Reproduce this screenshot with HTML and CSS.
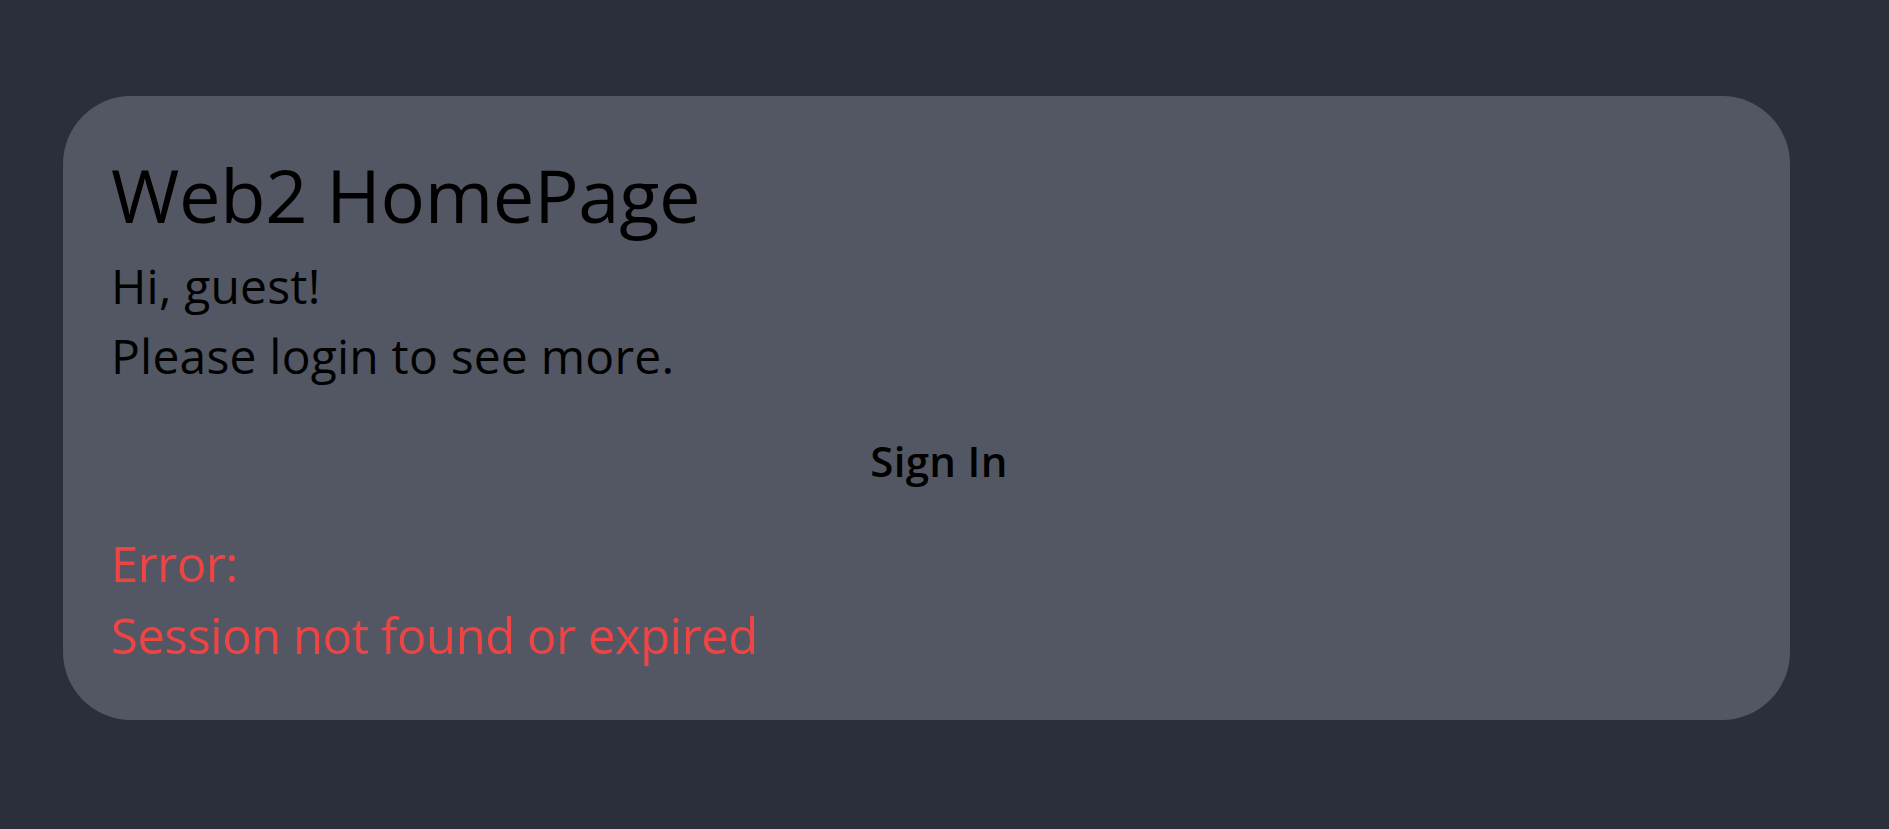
FILE: index.html
```html
<!DOCTYPE html>
<html lang="en">
<head>
<meta charset="utf-8">
<title>Web2 HomePage</title>
<link rel="stylesheet" href="styles.css">
</head>
<body>
<main class="page">
  <section class="card">
    <h1 class="title">Web2 HomePage</h1>
    <div class="greeting">
      <p class="line">Hi, guest!</p>
      <p class="line">Please login to see more.</p>
    </div>
    <div class="actions">
      <button class="signin" type="button">Sign In</button>
    </div>
    <div class="error">
      <p class="error-line">Error:</p>
      <p class="error-line">Session not found or expired</p>
    </div>
  </section>
</main>
</body>
</html>
```
FILE: styles.css
```css
html, body {
  margin: 0;
  padding: 0;
  background: #2b2f3b;
  height: 100%;
}

body {
  font-family: "Open Sans", "Noto Sans", "DejaVu Sans", sans-serif;
  color: #000;
}

.page {
  padding: 96px 99px 0 63px;
}

.card {
  background: #525763;
  border-radius: 68px;
  padding: 54px 48px 49px 48px;
  display: flex;
  flex-direction: column;
}

.title {
  margin: 0;
  font-size: 74px;
  font-weight: 400;
  line-height: 90px;
  letter-spacing: -0.3px;
}

.greeting {
  margin-top: 11px;
}

.line {
  margin: 0;
  font-size: 48px;
  line-height: 70px;
  letter-spacing: 0.2px;
}

.actions {
  margin-top: 40px;
  display: flex;
  justify-content: center;
  padding-left: 25px;
}

.signin {
  background: none;
  border: none;
  padding: 0;
  margin: 0;
  font-family: inherit;
  font-size: 42px;
  font-weight: 600;
  line-height: 60px;
  letter-spacing: 0.3px;
  color: #000;
  cursor: pointer;
}

.error {
  margin-top: 36px;
  color: #ef4444;
}

.error-line {
  margin: 0;
  font-size: 49px;
  line-height: 72px;
  letter-spacing: -0.45px;
}
```
